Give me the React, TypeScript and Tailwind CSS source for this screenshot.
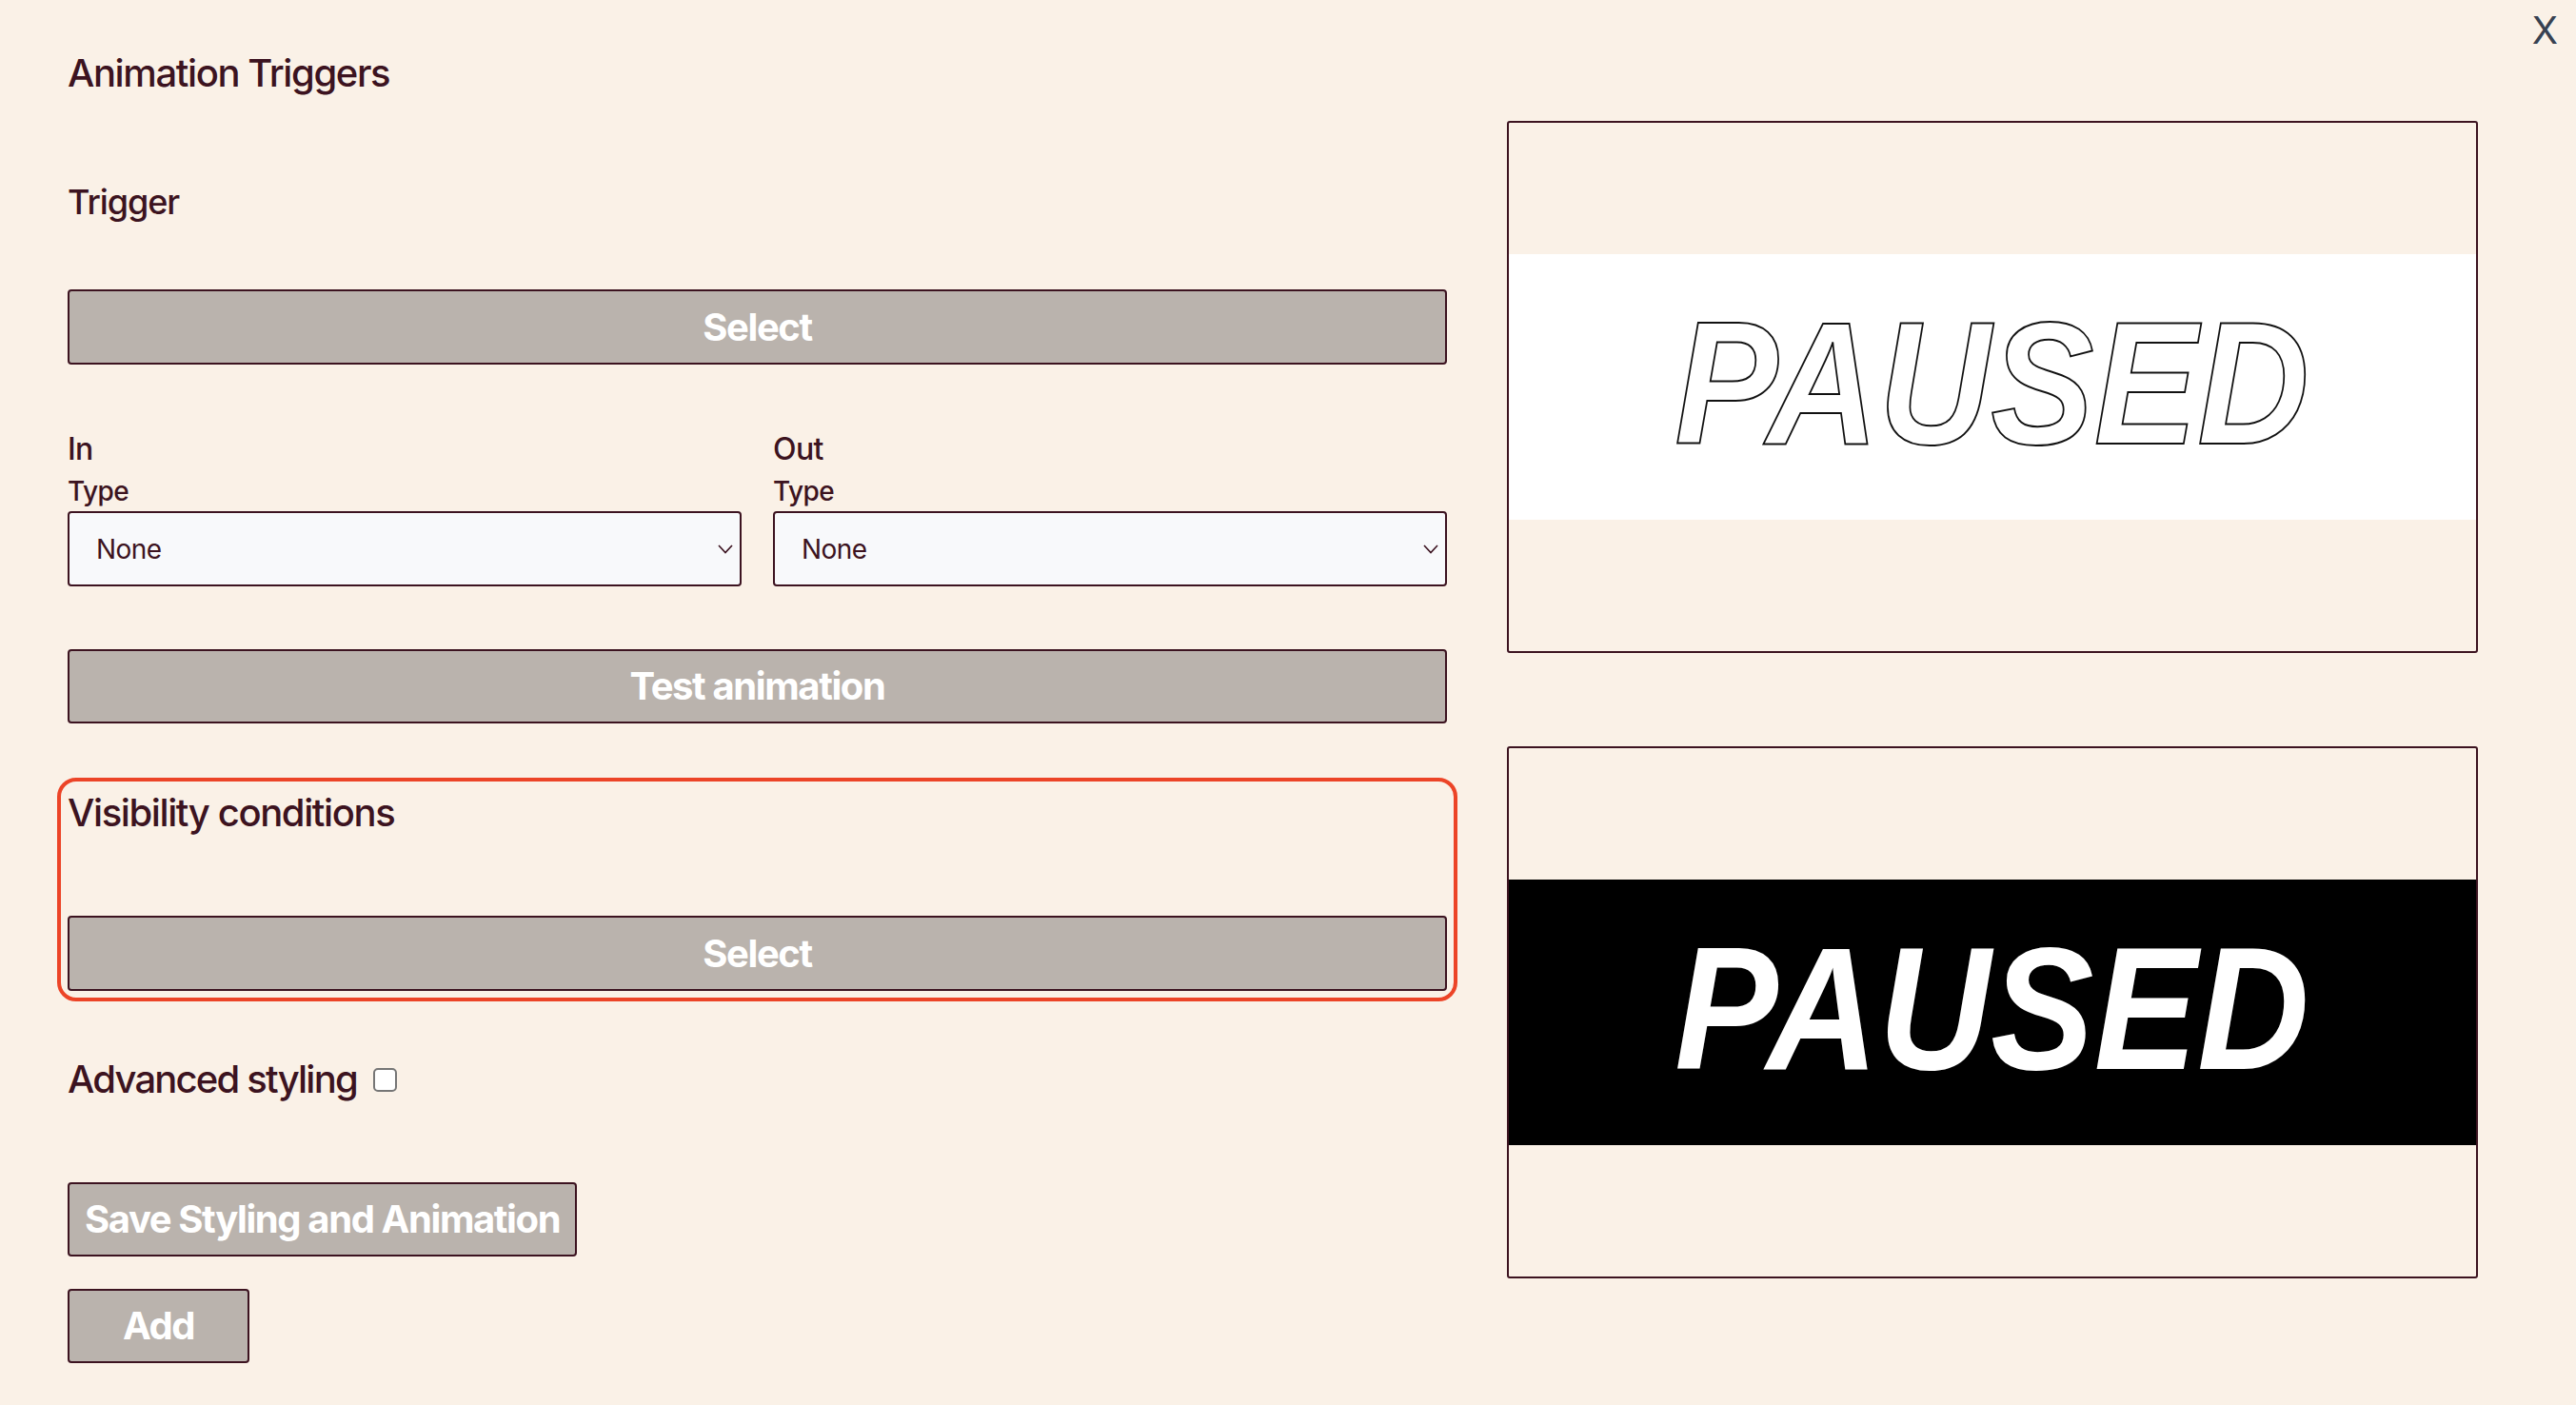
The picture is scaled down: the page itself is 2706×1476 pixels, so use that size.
import { ReactNode } from 'react';

function GrayButton({ children, className = '' }: { children: ReactNode; className?: string }) {
  return (
    <button
      type="button"
      className={`flex items-center justify-center bg-[#bab3ad] border-2 border-[#3c1320] rounded-[4px] text-white font-bold text-[40px] tracking-[-0.035em] ${className}`}
    >
      {children}
    </button>
  );
}

function TypeSelect({ label }: { label: string }) {
  return (
    <div className="flex flex-col">
      <div className="text-[32px] leading-[40px] font-medium tracking-[-0.02em]">{label}</div>
      <div className="mt-[7px] text-[28px] leading-[34px] font-medium tracking-[-0.02em]">Type</div>
      <div className="relative mt-[4px]">
        <select className="appearance-none w-full h-[79px] bg-[#f8f9fb] border-2 border-[#3c1320] rounded-[4px] pl-[28px] text-[28px] text-[#3c1320] tracking-[-0.02em] outline-none">
          <option>None</option>
        </select>
        {/* chevron drawn over the select */}
        <svg className="absolute right-[9px] top-[35px] pointer-events-none" width="16" height="10" viewBox="0 0 16 10">
          <path d="M1 1l7 7.5L15 1" stroke="#3c1320" strokeWidth="1.6" fill="none" />
        </svg>
      </div>
    </div>
  );
}

function PausedPanel({ dark }: { dark: boolean }) {
  return (
    <div className="h-[559px] border-2 border-[#3c1320] rounded-[3px] flex items-center">
      <div className={`w-full h-[279px] flex items-center justify-center ${dark ? 'bg-black' : 'bg-white'}`}>
        <span
          className={`inline-block mb-[10px] font-['Liberation_Sans',sans-serif] font-bold italic text-[184px] leading-none scale-x-[0.885] text-white ${
            dark ? '' : '[-webkit-text-stroke:2px_#111]'
          }`}
        >
          PAUSED
        </span>
      </div>
    </div>
  );
}

export default function App() {
  return (
    <div className="relative w-full h-[1476px] overflow-hidden bg-[#faf1e7] text-[#3c1320] font-['Inter',sans-serif]">
      {/* close */}
      <div className="absolute right-[19px] top-[8px] text-[40px] leading-[48px] text-[#374151]">X</div>

      <div className="flex pl-[71px] gap-[63px]">
        {/* LEFT: form */}
        <div className="w-[1449px] flex flex-col pt-[53px]">
          <h2 className="text-[40px] leading-[48px] font-medium tracking-[-0.035em]">Animation Triggers</h2>
          <div className="mt-[89px] text-[36px] leading-[44px] font-medium tracking-[-0.03em]">Trigger</div>
          <GrayButton className="mt-[70px] h-[79px] w-full">Select</GrayButton>

          <div className="mt-[69px] grid grid-cols-2 gap-x-[33px]">
            <TypeSelect label="In" />
            <TypeSelect label="Out" />
          </div>

          <GrayButton className="mt-[66px] h-[78px] w-full">Test animation</GrayButton>

          <div className="mt-[57px] -mx-[11px] border-4 border-[#ec4427] rounded-[20px] px-[7px] pt-[9px] pb-[7px]">
            <div className="text-[40px] leading-[48px] font-medium tracking-[-0.035em]">Visibility conditions</div>
            <GrayButton className="mt-[84px] h-[79px] w-full">Select</GrayButton>
          </div>

          <div className="mt-[58px] flex items-center gap-[17px]">
            <span className="text-[40px] leading-[48px] font-medium tracking-[-0.045em]">Advanced styling</span>
            <span className="w-[25px] h-[25px] border-2 border-[#767676] rounded-[5px] bg-white" />
          </div>

          <GrayButton className="mt-[84px] h-[78px] self-start px-[16px]">Save Styling and Animation</GrayButton>
          <GrayButton className="mt-[34px] h-[78px] w-[191px]">Add</GrayButton>
        </div>

        {/* RIGHT: previews */}
        <div className="w-[1020px] flex flex-col gap-[98px] pt-[127px]">
          <PausedPanel dark={false} />
          <PausedPanel dark={true} />
        </div>
      </div>
    </div>
  );
}
